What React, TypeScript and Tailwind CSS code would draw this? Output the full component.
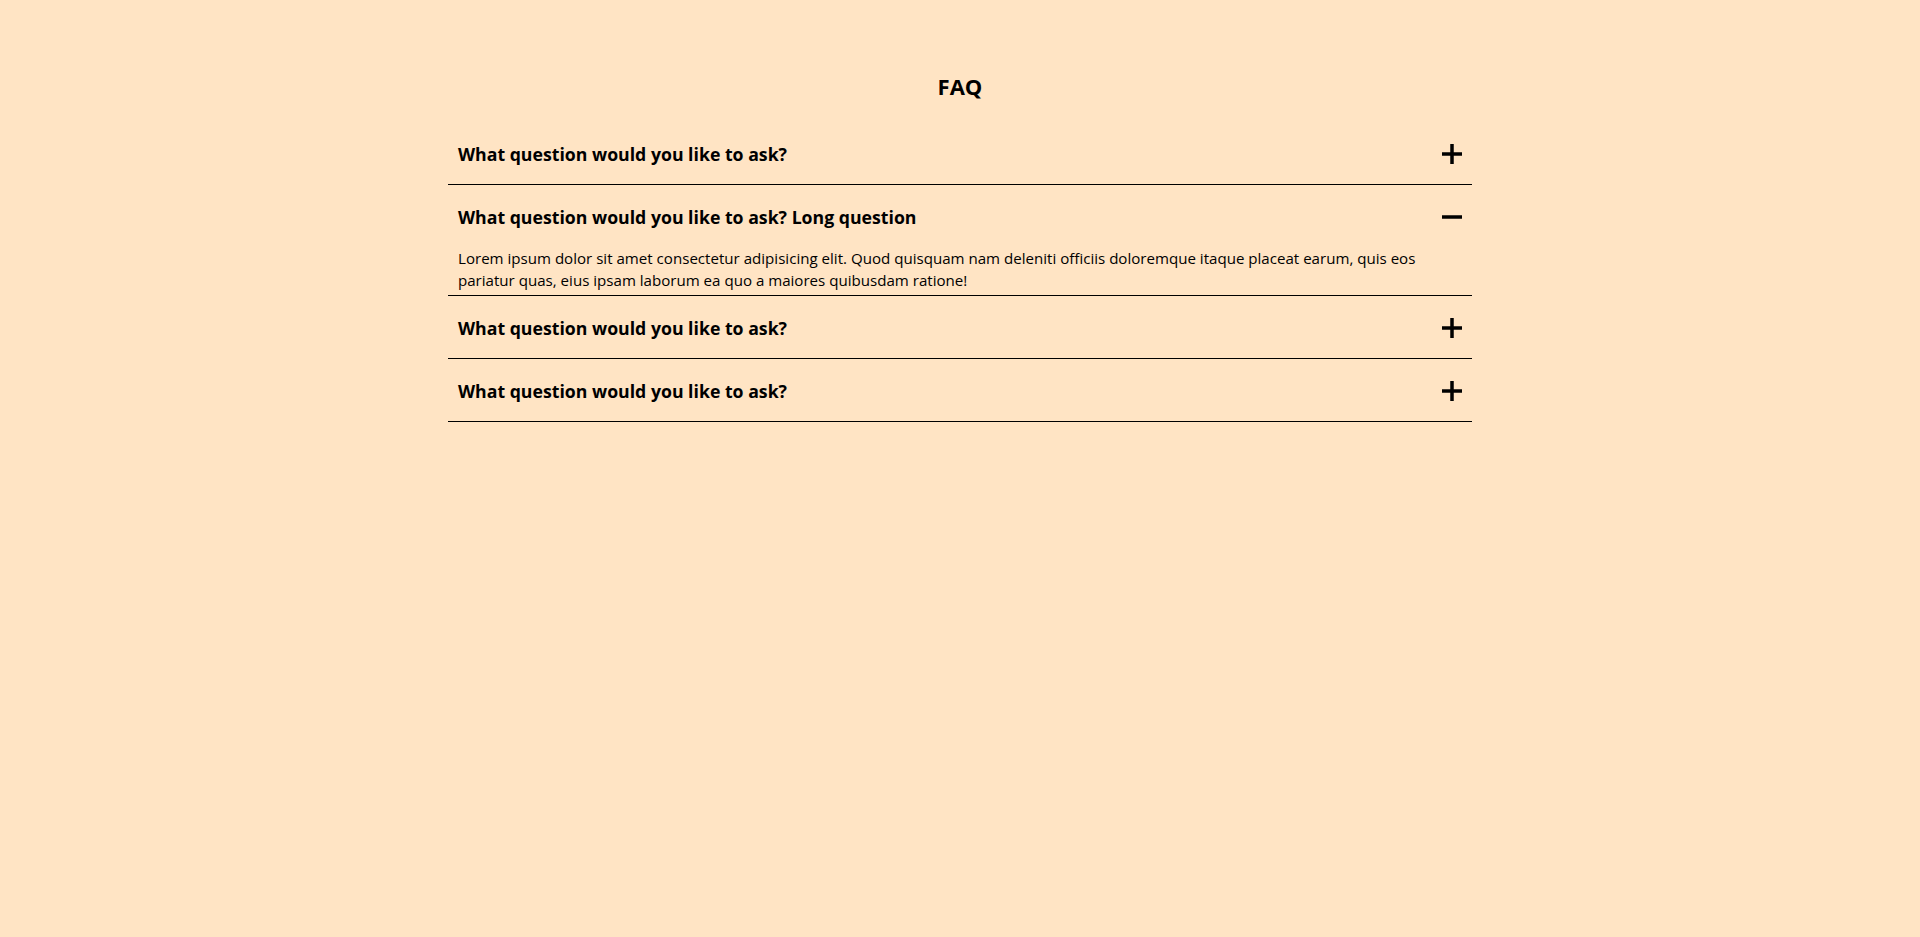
import { useState } from 'react'

const faqs = [
  {
    question: 'What question would you like to ask?',
    answer:
      'Lorem ipsum dolor sit amet consectetur adipisicing elit. Quod quisquam nam deleniti officiis doloremque itaque placeat earum, quis eos pariatur quas, eius ipsam laborum ea quo a maiores quibusdam ratione!',
  },
  {
    question: 'What question would you like to ask? Long question',
    answer:
      'Lorem ipsum dolor sit amet consectetur adipisicing elit. Quod quisquam nam deleniti officiis doloremque itaque placeat earum, quis eos pariatur quas, eius ipsam laborum ea quo a maiores quibusdam ratione!',
  },
  {
    question: 'What question would you like to ask?',
    answer:
      'Lorem ipsum dolor sit amet consectetur adipisicing elit. Quod quisquam nam deleniti officiis doloremque itaque placeat earum, quis eos pariatur quas, eius ipsam laborum ea quo a maiores quibusdam ratione!',
  },
  {
    question: 'What question would you like to ask?',
    answer:
      'Lorem ipsum dolor sit amet consectetur adipisicing elit. Quod quisquam nam deleniti officiis doloremque itaque placeat earum, quis eos pariatur quas, eius ipsam laborum ea quo a maiores quibusdam ratione!',
  },
]

function PlusMinus({ open }: { open: boolean }) {
  return (
    <svg width="20" height="20" viewBox="0 0 20 20" className="shrink-0">
      <line x1="0" y1="10" x2="20" y2="10" stroke="black" strokeWidth="3.5" strokeLinecap="round" />
      {!open && (
        <line x1="10" y1="0" x2="10" y2="20" stroke="black" strokeWidth="3.5" strokeLinecap="round" />
      )}
    </svg>
  )
}

export default function App() {
  const [openIndex, setOpenIndex] = useState<number | null>(1)

  return (
    <div className="min-h-screen bg-[#ffe4c4] text-black font-['Open_Sans',sans-serif]">
      <div className="mx-auto w-[1024px] pt-[69px]">
        <h1 className="text-center text-[22px] font-bold leading-[34px] mb-[19px]">FAQ</h1>

        {faqs.map((faq, index) => {
          const open = openIndex === index
          return (
            <div key={index} className="border-b border-black">
              <button
                onClick={() => setOpenIndex(open ? null : index)}
                className="flex h-[62px] w-full items-center justify-between px-2.5 pt-[2px] text-left cursor-pointer"
              >
                <span className="text-[17.7px] font-bold">{faq.question}</span>
                <PlusMinus open={open} />
              </button>
              {open && (
                <p className="px-2.5 pb-1 text-[15.1px] leading-[22px]">{faq.answer}</p>
              )}
            </div>
          )
        })}
      </div>
    </div>
  )
}
